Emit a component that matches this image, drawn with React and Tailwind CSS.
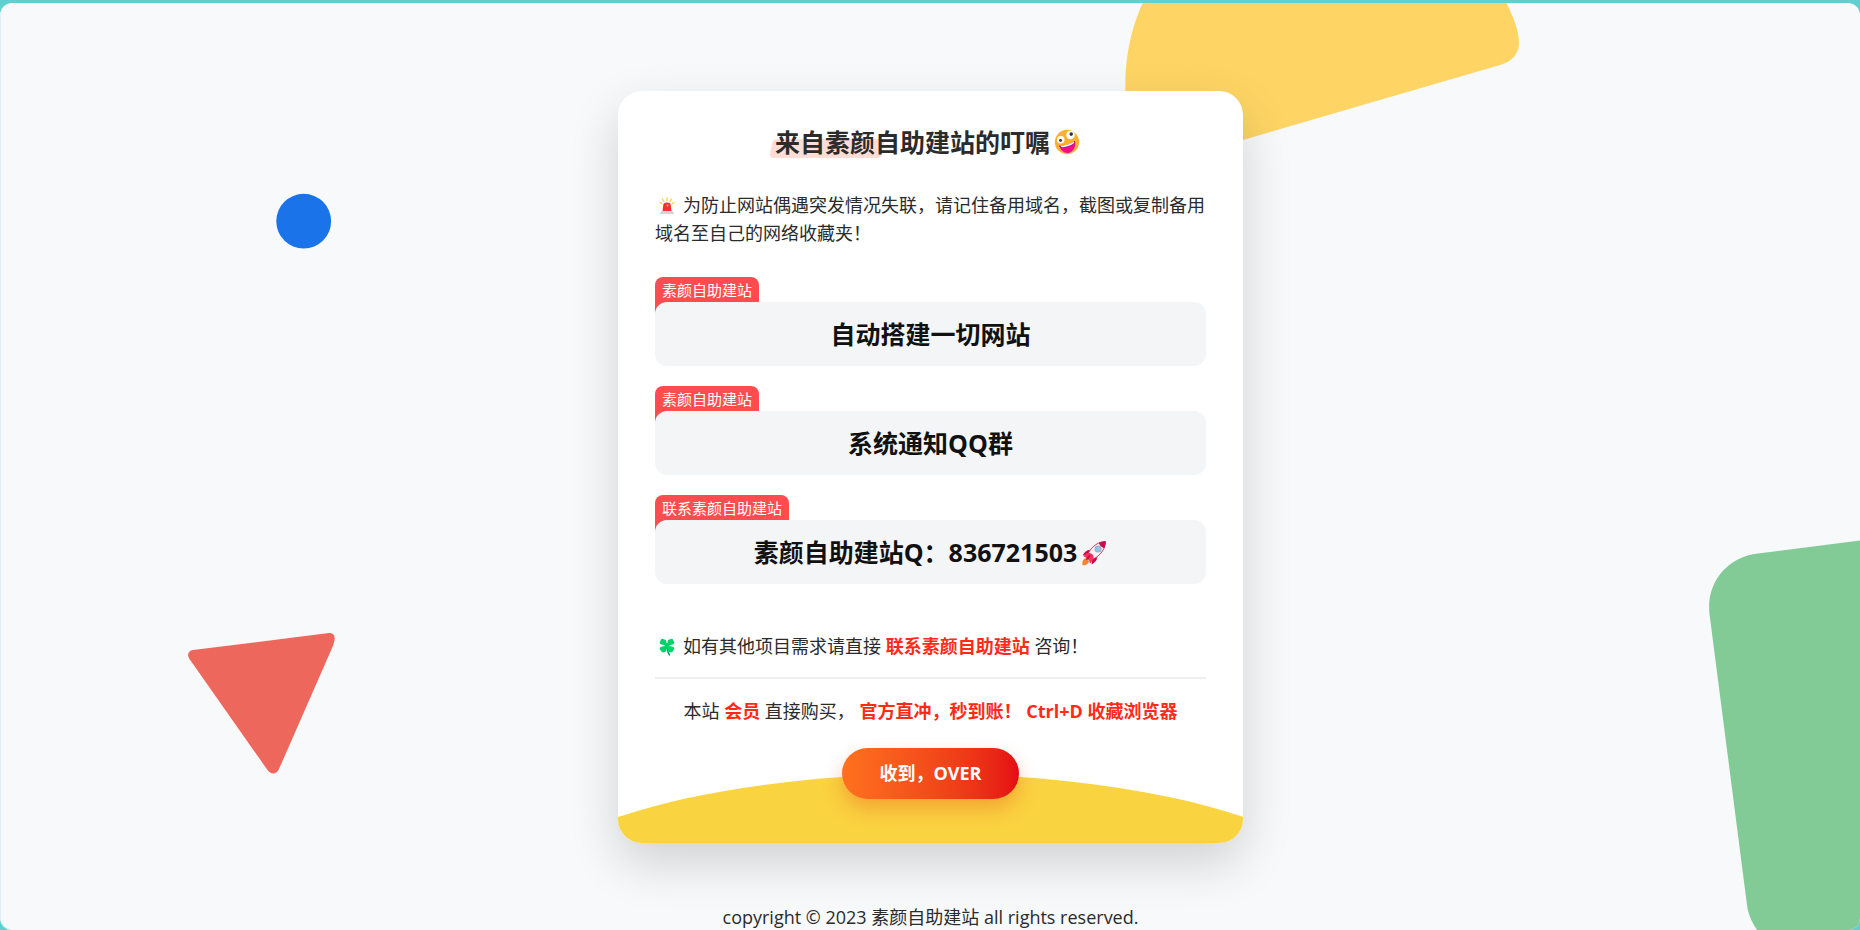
const entries = [
  { label: '素颜自助建站', text: '自动搭建一切网站' },
  { label: '素颜自助建站', text: '系统通知QQ群' },
  { label: '联系素颜自助建站', text: '素颜自助建站Q：836721503', rocket: true },
];

function Backdrop() {
  return (
    <svg
      aria-hidden="true"
      className="absolute inset-0 h-full w-full"
      viewBox="1 3 1859 927"
      preserveAspectRatio="xMidYMid slice"
    >
      <path
        fill="#fed564"
        d="M1144 0C1131 28 1125 55 1125.300 90C1126 110 1128 128 1134 150C1140 165 1152 168 1168 162L1243 140L1500 65C1514 61 1519 52 1519 43C1519 30 1513 16 1505 0Z"
      />
      <circle cx="303.700" cy="221.200" r="27.400" fill="#1a73e8" />
      <path
        fill="#ee675c"
        d="M193 650L329 633C333 632.500 335.500 636 334.500 640C334.300 642 333.500 644 332.500 647L279 769C276.500 774.500 271 775 267.500 770L189.500 659C186.500 655 188.500 650.500 193 650Z"
      />
      <path
        fill="#83cb96"
        d="M1860 540.500L1758 553.500C1727 557 1706 583 1709.500 614L1747 905C1748 914 1752 922 1757 930H1860Z"
      />
    </svg>
  );
}

function ZanyFace() {
  return (
    <svg role="img" aria-label="zany face" className="size-[26px]" viewBox="0 0 32 32">
      <circle cx="16" cy="16" r="15" fill="#fdb02f" />
      <path d="M6.500 20.200C12 21.500 20.500 19.200 25.800 14.800C27.500 20.500 24.500 27.200 19 29.200C13 30.500 7.800 26.500 6.500 20.200Z" fill="#f70a8d" />
      <path d="M6.500 20.200C12 21.500 20.500 19.200 25.800 14.800L26 18C21 22 13 24.500 7.500 23Z" fill="#bb1d80" />
      <path d="M8 20.500C13 21 20 18.800 24.500 15.800L24.800 17.300C20 21 13 22.800 8.800 22.200Z" fill="#fff" />
      <circle cx="8.300" cy="13.300" r="4.600" fill="#fff" />
      <circle cx="20.300" cy="7.300" r="5.300" fill="#fff" />
      <circle cx="8" cy="14" r="1.800" fill="#402a32" />
      <circle cx="21.200" cy="6.300" r="2.200" fill="#402a32" />
    </svg>
  );
}

function Siren() {
  return (
    <svg role="img" aria-label="siren" className="h-[18px] w-4" viewBox="0 0 32 36">
      <path d="M16 2V7M7 4L10 9M25 4L22 9M2 11L6 13.500M30 11L26 13.500" stroke="#fcd53f" strokeWidth="2.800" strokeLinecap="round" />
      <path d="M7 29L8.500 16C9 12.500 12 11 16 11S23 12.500 23.500 16L25 29Z" fill="#f92f35" />
      <circle cx="17" cy="17" r="1.800" fill="#ffb4a8" />
      <path d="M5 28H27L31 34H1Z" fill="#d5d5d5" />
    </svg>
  );
}

function Clover() {
  return (
    <svg role="img" aria-label="four leaf clover" className="h-[18px] w-4" viewBox="0 0 32 36">
      <path d="M16 18C17 24 17 29 21 34" fill="none" stroke="#008463" strokeWidth="2.500" strokeLinecap="round" />
      <path
        fill="#00d26a"
        d="M16 16C13 13 8 14 5 13C1 12 0 8 3 6C3 2 8 0 10 3C14 2 15 6 15 9L16 12L17 9C17 6 18 2 22 3C24 0 29 2 29 6C32 8 31 12 27 13C24 14 21 14 18 16C21 17 25 16 28 18C32 19 31 24 28 25C28 29 23 30 21 28C17 29 17 23 16 20C15 23 15 29 11 28C9 30 4 29 4 25C1 24 0 19 4 18C7 16 11 17 16 16Z"
      />
      <circle cx="16" cy="16" r="5" fill="#00d26a" />
    </svg>
  );
}

function Rocket() {
  return (
    <svg role="img" aria-label="rocket" className="size-[26px]" viewBox="0 0 32 32">
      <path d="M2 31C1 28 2 23 6 22L10 26C9 30 5 31 2 31Z" fill="#ff822d" />
      <path d="M11 12C7 12 4 15 2 19L9 18ZM20 21C20 25 17 28 13 30L14 23Z" fill="#ca0b4a" />
      <path d="M30 2C22 2 14 7 9 16L7 22L10 25L16 23C25 18 30 10 30 2Z" fill="#f4f4f4" stroke="#ca0b4a" strokeWidth="1" />
      <path d="M30.500 1.500C27 1.500 24 2.500 22 3.500C23 7 25 9 28.500 10C30 7 30.500 4 30.500 1.500Z" fill="#ca0b4a" />
      <path d="M3 20C5 17 8 15.500 11 16C14 17 16 19 15.500 21.500C15 25 12 28 11 29L10 24L7 22Z" fill="#f8315f" />
      <path d="M6 24C7 21 9 19 12 18C11 21 9.500 23 7 25Z" fill="#ca0b4a" />
      <circle cx="21" cy="11" r="3.700" fill="#8dc5ee" stroke="#a0aebb" strokeWidth="1.300" />
    </svg>
  );
}

export default function App() {
  return (
    <div className="min-h-screen bg-[#5fd0cf] pt-[3px] font-['Open_Sans','Noto_Sans_CJK_SC',sans-serif] text-[#2b2b2b]">
      <div className="relative flex min-h-[calc(100vh-3px)] flex-col items-center overflow-hidden rounded-xl border-l border-[#def1f3] bg-[#f7f9fb] px-4 pt-[88px]">
        <Backdrop />

        <main className="relative w-full max-w-[625px] overflow-hidden rounded-3xl bg-white px-[37px] pt-[33px] pb-[44px] shadow-[0_20px_50px_rgba(0,0,0,0.16)]">
          <div
            aria-hidden="true"
            className="absolute top-[683px] left-1/2 h-[286px] w-[140%] -translate-x-1/2 rounded-[50%] bg-[#fad341]"
          />

          <div className="relative">
            <h1 className="flex items-center justify-center gap-1 pr-1.5 text-[25px] leading-9 font-bold">
              <span className="relative">
                <span
                  aria-hidden="true"
                  className="absolute bottom-0.5 -left-1 h-[19px] w-28 -skew-x-12 rounded-sm bg-[#ffddd7]"
                />
                <span className="relative">来自素颜自助建站的叮嘱</span>
              </span>
              <ZanyFace />
            </h1>

            <p className="mt-[31px] text-[18px] leading-7">
              <span className="mr-2 ml-1 inline-flex align-[-3px]">
                <Siren />
              </span>
              为防止网站偶遇突发情况失联，请记住备用域名，截图或复制备用
              <br />
              域名至自己的网络收藏夹！
            </p>

            <div className="mt-[30px] flex flex-col gap-5">
              {entries.map((entry, i) => (
                <section key={i}>
                  <h2 className="-mb-[18px] w-fit rounded-t-lg bg-[#ff4d4f] px-[7px] pb-4 text-[15px] leading-[27px] font-normal text-white">
                    {entry.label}
                  </h2>
                  <p className="relative flex h-16 items-center justify-center gap-1 rounded-xl bg-[#f3f5f7] pt-0.5 text-[25px] font-bold text-[#111]">
                    {entry.text}
                    {entry.rocket && <Rocket />}
                  </p>
                </section>
              ))}
            </div>

            <p className="mt-12 text-[18px] leading-7">
              <span className="mr-2 ml-1 inline-flex align-[-3px]">
                <Clover />
              </span>
              如有其他项目需求请直接{' '}
              <a href="#contact" className="font-bold text-[#ff2b17]">联系素颜自助建站</a>{' '}
              咨询！
            </p>

            <hr className="mt-[17px] border-t-2 border-[#efefef]" />

            <p className="mt-[18px] text-center text-[18px] leading-7">
              本站 <strong className="font-bold text-[#ff2b17]">会员</strong> 直接购买，{' '}
              <strong className="font-bold text-[#ff2b17]">官方直冲，秒到账！ Ctrl+D 收藏浏览器</strong>
            </p>

            <div className="mt-[23px] flex justify-center">
              <button
                type="button"
                className="h-[51px] w-[177px] rounded-full bg-linear-to-r from-[#ff711f] to-[#e50914] text-[18px] font-bold text-white shadow-[0_10px_20px_rgba(229,60,20,0.3)]"
              >
                收到，OVER
              </button>
            </div>
          </div>
        </main>

        <footer className="relative mt-[62px] text-[18px] leading-6">
          copyright © 2023 素颜自助建站 all rights reserved.
        </footer>
      </div>
    </div>
  );
}
